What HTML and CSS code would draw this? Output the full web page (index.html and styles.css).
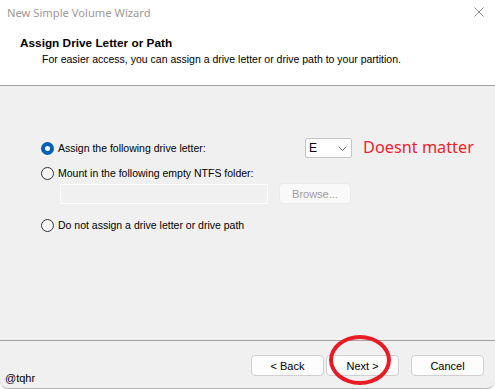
FILE: index.html
```html
<!DOCTYPE html>
<html lang="en">
<head>
    <meta charset="UTF-8">
    <meta name="viewport" content="width=device-width, initial-scale=1.0">
    <title>New Simple Volume Wizard</title>
    <link rel="stylesheet" href="styles.css">
</head>
<body>
    <div class="window">
        <div class="titlebar">
            <span class="title">New Simple Volume Wizard</span>
            <svg class="close" width="10" height="10" viewBox="0 0 10 10">
                <path d="M0.5 0.5 L9.5 9.5 M9.5 0.5 L0.5 9.5" stroke="#8a8a8a" stroke-width="1" fill="none"/>
            </svg>
        </div>

        <div class="header">
            <div class="heading">Assign Drive Letter or Path</div>
            <div class="subheading">For easier access, you can assign a drive letter or drive path to your partition.</div>
        </div>

        <div class="content">
            <div class="row row-letter">
                <label class="option option-wide">
                    <span class="radio checked"></span>
                    <span>Assign the following drive letter:</span>
                </label>
                <div class="combo">
                    <span>E</span>
                    <svg width="9" height="5" viewBox="0 0 9 5">
                        <path d="M0.5 0.5 L4.5 4.5 L8.5 0.5" stroke="#666" stroke-width="1" fill="none"/>
                    </svg>
                </div>
                <span class="note">Doesnt matter</span>
            </div>

            <div class="row row-mount">
                <label class="option">
                    <span class="radio"></span>
                    <span>Mount in the following empty NTFS folder:</span>
                </label>
            </div>

            <div class="row row-path">
                <div class="path-input"></div>
                <button class="btn btn-browse" disabled>Browse...</button>
            </div>

            <div class="row row-none">
                <label class="option">
                    <span class="radio"></span>
                    <span>Do not assign a drive letter or drive path</span>
                </label>
            </div>
        </div>

        <div class="footer">
            <span class="tag">@tqhr</span>
            <button class="btn">&lt; Back</button>
            <button class="btn btn-next">Next &gt;</button>
            <button class="btn btn-cancel">Cancel</button>
        </div>

        <div class="circle"></div>
    </div>
</body>
</html>
```

FILE: styles.css
```css
html {
    background: #ffffff;
}
body {
    margin: 0;
    font-family: 'Liberation Sans', Arial, sans-serif;
    font-size: 10.5px;
    color: #000;
}
.window {
    position: relative;
    width: 495px;
    height: 389px;
    box-sizing: border-box;
    background: #f0f0f0;
    border-bottom: 1px solid #b4b4b4;
    border-radius: 0 0 8px 8px;
    overflow: hidden;
}
.titlebar {
    height: 24px;
    background: #fff;
    display: flex;
    align-items: center;
    padding: 0 11px 0 7px;
}
.title {
    flex: 1;
    font-family: 'Noto Sans', sans-serif;
    font-size: 11.2px;
    color: #9a9a9a;
}
.header {
    background: #fff;
    height: 62px;
    box-sizing: border-box;
    padding: 12px 0 0 20px;
    border-bottom: 1px solid #a0a0a0;
    line-height: 14px;
}
.heading {
    font-weight: bold;
    font-size: 11.8px;
}
.subheading {
    margin: 2px 0 0 22px;
}
.content {
    height: 254px;
    box-sizing: border-box;
    padding: 52px 0 0 41px;
    line-height: 14px;
}
.row {
    display: flex;
    align-items: center;
}
.option {
    display: flex;
    align-items: center;
    gap: 4px;
}
.option-wide {
    width: 264px;
}
.radio {
    width: 13px;
    height: 13px;
    box-sizing: border-box;
    border: 1px solid #333;
    border-radius: 50%;
    background: #f6f6f6;
}
.radio.checked {
    border: 4px solid #005fb8;
    background: #fff;
}
.row-letter {
    height: 20px;
}
.combo {
    width: 47px;
    height: 20px;
    box-sizing: border-box;
    background: #fff;
    border: 1px solid #c4c4c4;
    border-radius: 2px;
    display: flex;
    align-items: center;
    justify-content: space-between;
    padding: 0 4px 0 3px;
    font-size: 12px;
}
.note {
    margin-left: 11px;
    font-family: 'Noto Sans', sans-serif;
    font-size: 16.3px;
    color: #f0222a;
    margin-top: -3px;
}
.row-mount {
    margin-top: 8px;
}
.row-path {
    margin: 3px 0 0 19px;
    gap: 11px;
}
.path-input {
    width: 208px;
    height: 20px;
    box-sizing: border-box;
    border: 1px solid #fbfbfb;
    background: #f0f0f0;
}
.row-none {
    margin-top: 14px;
}
.btn {
    width: 73px;
    height: 21px;
    box-sizing: border-box;
    background: #fdfdfd;
    border: 1px solid #d0d0d0;
    border-radius: 4px;
    font-family: 'Liberation Sans', Arial, sans-serif;
    font-size: 11px;
    color: #000;
    padding: 0;
}
.btn-browse {
    width: 72px;
    background: #f9f9f9;
    border-color: #ebebeb;
    color: #9c9c9c;
}
.footer {
    border-top: 1px solid #a0a0a0;
    display: flex;
    align-items: flex-start;
    padding: 14px 11px 0 5px;
    gap: 2px;
}
.tag {
    margin: 16px auto 0 0;
    line-height: 14px;
    font-size: 11px;
}
.btn-cancel {
    margin-left: 10px;
}
.circle {
    position: absolute;
    left: 329px;
    top: 335px;
    width: 62px;
    height: 50px;
    box-sizing: border-box;
    border: 4px solid #e81c24;
    border-radius: 50%;
}
```
